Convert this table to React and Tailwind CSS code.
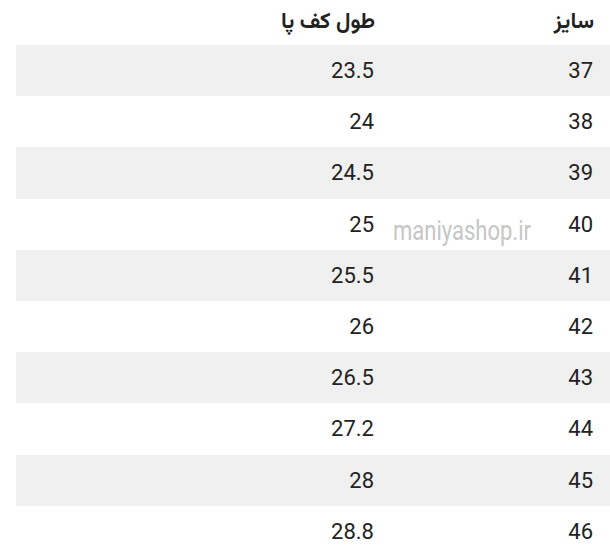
const rows = [
  ["37", "23.5"],
  ["38", "24"],
  ["39", "24.5"],
  ["40", "25"],
  ["41", "25.5"],
  ["42", "26"],
  ["43", "26.5"],
  ["44", "27.2"],
  ["45", "28"],
  ["46", "28.8"],
];

export default function App() {
  return (
    <div className="relative w-[610px] h-[557px] bg-white overflow-hidden font-['Roboto','DejaVu_Sans',sans-serif] text-[#222]">
      <div dir="rtl" className="ml-[16px] w-[594px]">
        {/* header */}
        <div className="flex h-[45px] items-center font-bold text-[22px] font-['Vazirmatn','Noto_Sans_Arabic','Noto_Naskh_Arabic','DejaVu_Sans',sans-serif]">
          <div className="w-[219px] pr-[16px] text-right">سایز</div>
          <div className="flex-1 pr-[16px] text-right">طول کف پا</div>
        </div>

        {/* body */}
        {rows.map(([size, len], i) => (
          <div
            key={size}
            className={`flex h-[51.2px] items-center text-[22px] ${i % 2 === 0 ? "bg-[#f0f0f0]" : "bg-white"}`}
          >
            <div className="w-[219px] pr-[17px] text-right">{size}</div>
            <div className="flex-1 pr-[17px] text-right">{len}</div>
          </div>
        ))}
      </div>

      {/* watermark */}
      <div className="absolute left-[393px] top-[218px] text-[27px] leading-none text-[#c6c6c6] origin-left scale-x-[0.815] select-none">
        maniyashop.ir
      </div>
    </div>
  );
}
